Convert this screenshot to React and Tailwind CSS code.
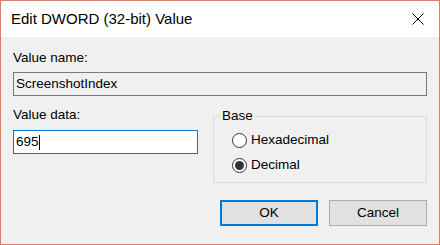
import React from "react";

const font = "font-['Liberation_Sans',Arial,sans-serif]";

const Radio = ({ label, checked }) => (
  <div className="flex items-center h-[16px]">
    <span className="w-[15px] h-[15px] rounded-full border border-[#333333] bg-white flex items-center justify-center">
      {checked && <span className="w-[9px] h-[9px] rounded-full bg-[#333333]"></span>}
    </span>
    <span className="ml-[4px] leading-[16px]">{label}</span>
  </div>
);

const App = () => {
  return (
    <div
      className={`w-[440px] h-[245px] flex flex-col border border-[#d9826f] bg-[#f0f0f0] text-black text-[13.5px] ${font}`}
    >
      {/* Title bar */}
      <div className="h-[36px] bg-white flex items-center pl-[10px] pr-[15px]">
        <span className="flex-1 text-[15px]">Edit DWORD (32-bit) Value</span>
        <svg width="12" height="12" viewBox="0 0 12 12">
          <path d="M0.5 0.5 L11.5 11.5 M11.5 0.5 L0.5 11.5" stroke="#000" strokeWidth="1" fill="none" />
        </svg>
      </div>

      {/* Body */}
      <div className="flex-1 px-[12px] pt-[13px]">
        <div className="leading-[16px]">Value name:</div>
        <div className="mt-[6px] h-[24px] border border-[#7a7a7a] bg-[#f0f0f0] pl-[2px] flex items-center">
          ScreenshotIndex
        </div>

        <div className="flex gap-[15px]">
          <div className="w-[185px] pt-[11px]">
            <div className="leading-[16px]">Value data:</div>
            <div className="mt-[7px] h-[24px] border border-[#0078d7] bg-white pl-[2px] flex items-center">
              <span>695</span>
              <span className="w-[1px] h-[15px] bg-black"></span>
            </div>
          </div>

          <fieldset className="flex-1 mt-[12px] border border-[#dcdcdc] pl-[18px] pb-[9px]">
            <legend className="ml-[-12px] px-[2px] leading-[16px]">Base</legend>
            <div className="pt-[8px] flex flex-col gap-[9px]">
              <Radio label="Hexadecimal" />
              <Radio label="Decimal" checked />
            </div>
          </fieldset>
        </div>

        <div className="flex justify-end gap-[11px] mt-[17px]">
          <button className="w-[98px] h-[26px] border-2 border-[#0078d7] bg-[#e1e1e1] leading-none">
            OK
          </button>
          <button className="w-[98px] h-[26px] border border-[#adadad] bg-[#e1e1e1] leading-none">
            Cancel
          </button>
        </div>
      </div>
    </div>
  );
};

export default App;
